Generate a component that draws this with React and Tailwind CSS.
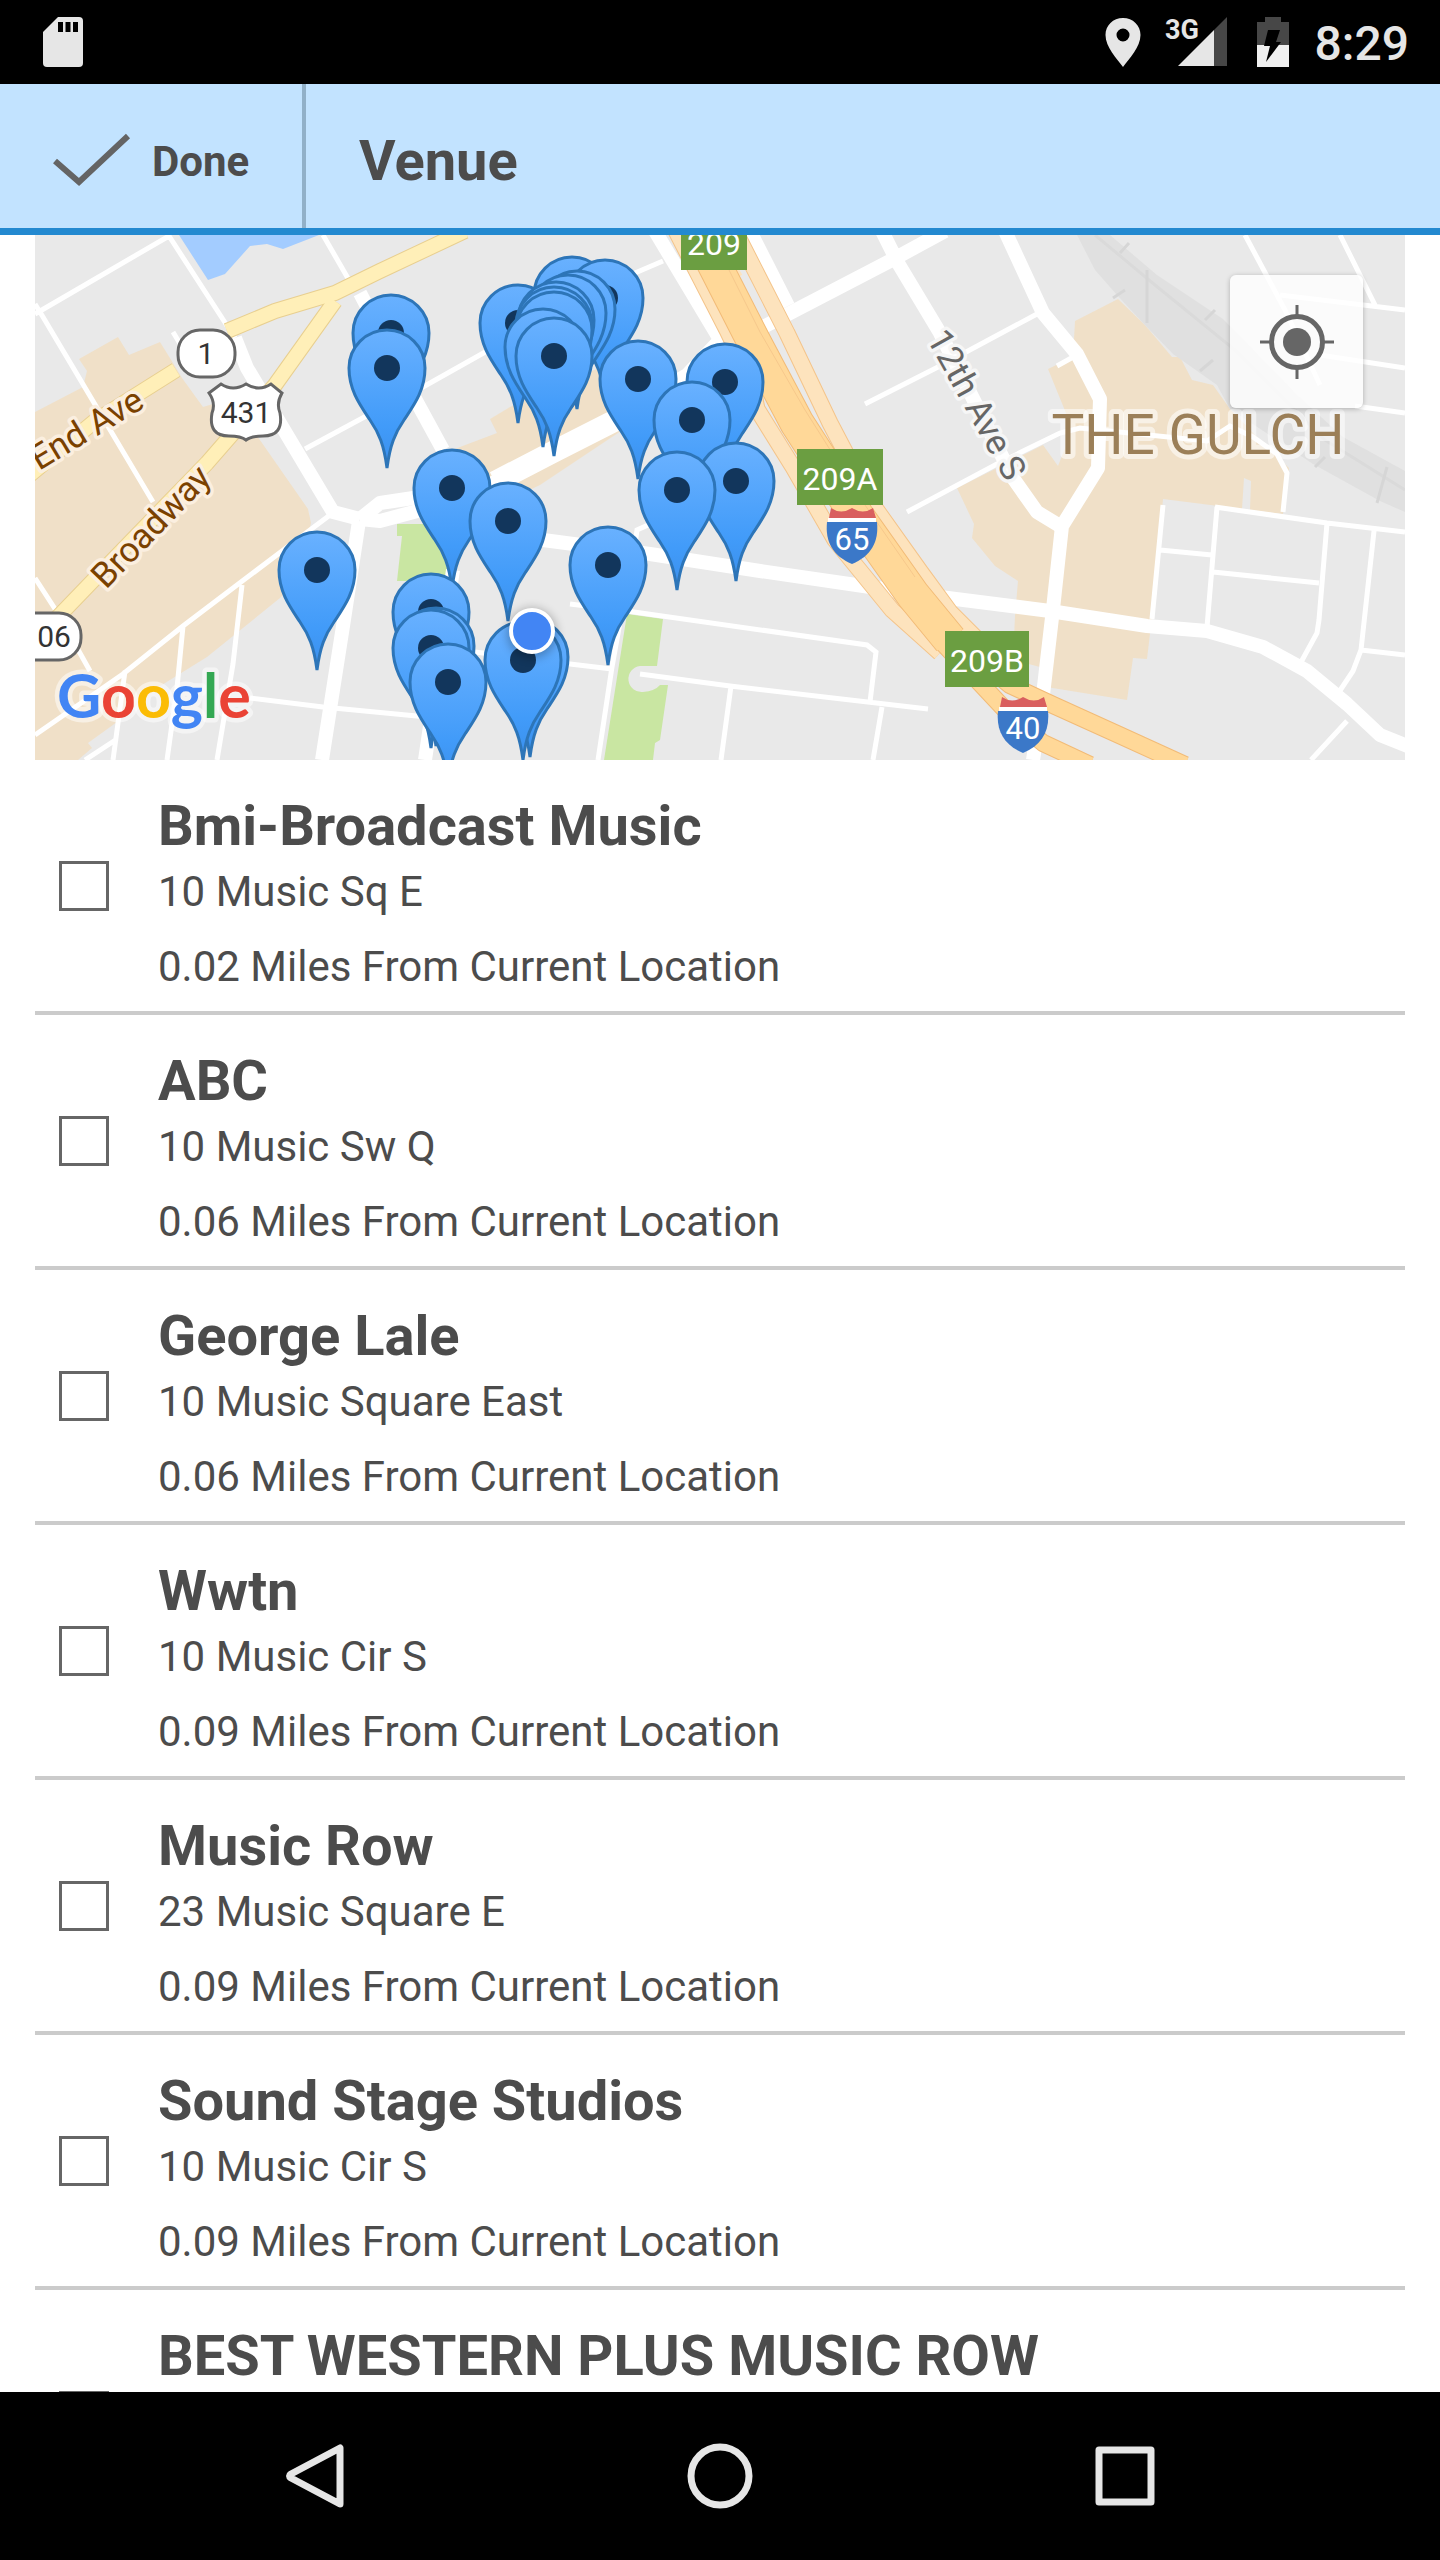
import React from "react";

const venues = [
  { name: "Bmi-Broadcast Music", address: "10 Music Sq E", miles: "0.02" },
  { name: "ABC", address: "10 Music Sw Q", miles: "0.06" },
  { name: "George Lale", address: "10 Music Square East", miles: "0.06" },
  { name: "Wwtn", address: "10 Music Cir S", miles: "0.09" },
  { name: "Music Row", address: "23 Music Square E", miles: "0.09" },
  { name: "Sound Stage Studios", address: "10 Music Cir S", miles: "0.09" },
  { name: "BEST WESTERN PLUS MUSIC ROW" },
];

const pins = [
  [356, 98], [352, 133], [483, 88], [537, 60], [570, 63], [542, 74], [533, 78],
  [521, 85], [519, 90], [519, 95], [508, 112], [519, 121], [603, 144], [690, 147],
  [657, 185], [701, 246], [642, 255], [417, 253], [473, 286], [282, 335],
  [573, 330], [396, 377], [401, 411], [396, 413], [413, 447], [495, 422], [488, 425],
];

function StatusBar() {
  return (
    <div className="flex h-[84px] shrink-0 items-center justify-between bg-black pr-[31px] pl-[43px] text-[#e6e6e6]">
      <svg className="h-[50px] w-[40px]" viewBox="0 0 40 50" role="img" aria-label="SD card">
        <path fill="currentColor" d="M15 0H36a4 4 0 0 1 4 4V46a4 4 0 0 1-4 4H4a4 4 0 0 1-4-4V15Z" />
        <path d="M15 5h5v10h-5zM22.500 5h5v10h-5zM30 5h5v10h-5z" fill="#000" />
      </svg>
      <div className="flex items-center">
        <svg className="h-[50px] w-[36px]" viewBox="0 0 36 50" role="img" aria-label="Location">
          <path
            fill="currentColor"
            fillRule="evenodd"
            d="M18 1C8 1 .500 8.500 .500 18 .500 30 12 42 18 50 24 42 35.500 30 35.500 18 35.500 8.500 28 1 18 1ZM18 11.500a6.500 6.500 0 1 1 0 13 6.500 6.500 0 0 1 0-13Z"
          />
        </svg>
        <svg className="ml-[23px] h-[50px] w-[64px] overflow-visible" viewBox="0 0 64 50" role="img" aria-label="3G signal">
          <path fill="#474747" d="M63 0V49H50V13Z" />
          <path fill="currentColor" d="M50 13V49H14Z" />
          <text x="1" y="22" fontSize="27" fontWeight="700" fontFamily="Roboto, sans-serif" fill="currentColor">3G</text>
        </svg>
        <svg className="ml-[28px] h-[50px] w-[34px]" viewBox="0 0 34 50" role="img" aria-label="Battery charging">
          <path fill="#474747" d="M9 0H25V5H33V28H1V5H9Z" />
          <path fill="#f0f0f0" d="M1 28H33V50H1Z" />
          <path d="M12 13H24L20 25H25L10 45L14 29H8Z" fill="#000" />
        </svg>
        <span className="ml-[25px] pt-[3px] text-[48px] leading-[56px] font-medium">8:29</span>
      </div>
    </div>
  );
}

function Header() {
  return (
    <header className="flex h-[151px] shrink-0 items-stretch border-b-[7px] border-[#2389d0] bg-[#c2e3ff] text-[#4c4c4c]">
      <button type="button" className="flex w-[306px] items-center gap-5 border-r-4 border-[#91b0c8] pt-[10px] pl-[52px] text-[42px] font-bold">
        <svg className="h-[56px] w-[80px]" viewBox="0 0 80 56" aria-hidden="true">
          <path d="M3 28 27 49 76 3" fill="none" stroke="#646464" strokeWidth="6" />
        </svg>
        <span>Done</span>
      </button>
      <h1 className="flex items-center pt-[10px] pl-[53px] text-[56px] font-bold">Venue</h1>
    </header>
  );
}

function Pin({ x, y }) {
  return (
    <g transform={`translate(${x} ${y})`}>
      <path
        d="M0 100C-3 77-8 65-17 52C-27 37-38 22-38 0A38 38 0 0 1 38 0C38 22 27 37 17 52C8 65 3 77 0 100Z"
        fill="url(#pinFill)"
        stroke="#2d75b8"
        strokeWidth="3"
      />
      <circle r="13" fill="#12365c" />
    </g>
  );
}

function Interstate({ x, y, label }) {
  return (
    <g transform={`translate(${x} ${y})`}>
      <path d="M3 10 5 0Q15 7 26 0Q37 7 47 0L50 10Z" fill="#d95f5f" />
      <path d="M2 10H50V14H2Z" fill="#fff" />
      <path d="M1 14H51C53 34 45 48 26 56C7 48-1 34 1 14Z" fill="#3b78c8" />
      <text x="26" y="42" textAnchor="middle" fontSize="31" fill="#fff">{label}</text>
    </g>
  );
}

function Exit({ x, y, width, label }) {
  return (
    <g transform={`translate(${x} ${y})`}>
      <rect width={width} height="56" fill="#6b9e41" />
      <text x={width / 2} y="41" textAnchor="middle" fontSize="32" fill="#fff">{label}</text>
    </g>
  );
}

function VenueMap() {
  return (
    <section aria-label="Map of venues" className="relative mx-[35px] h-[525px] shrink-0 overflow-hidden bg-[#e9e9e9]">
      <svg className="h-full w-full" viewBox="0 0 1370 525" preserveAspectRatio="xMidYMid slice" fontFamily="Roboto, sans-serif">
        <defs>
          <linearGradient id="pinFill" x1="0" y1="0" x2="0" y2="1">
            <stop offset="0" stopColor="#69b1ff" />
            <stop offset="0.7" stopColor="#419bf9" />
            <stop offset="1" stopColor="#3a8fec" />
          </linearGradient>
          <filter id="soft" x="-50%" y="-50%" width="200%" height="200%">
            <feGaussianBlur stdDeviation="5" />
          </filter>
        </defs>

        <path fill="#a3ccff" d="M144 0 173 45 190 39 215 11 232 9 248 14 284 0Z" />
        <g fill="#f0e0c8">
          <path d="M0 177 48 152 52 136 44 124 83 102 94 120 125 107 138 128 147 143 168 172 178 169 218 195 273 274 276 288 262 345 245 363 172 422 122 453 82 487 53 508 57 513 43 525H0Z" />
          <path d="M400 222 425 212 462 198 455 184 475 172 525 147 565 133 592 192 505 250 480 262 440 265Z" />
          <path d="M1083 64 1110 90 1137 122 1145 122 1157 145 1178 150 1195 174 1228 208 1254 233 1248 279 1215 275 1216 246 1209 243 1207 274 1128 264 1117 382 1112 424 1098 423 1092 465 1005 451 1005 432 978 425 980 381 983 346 960 331 937 303 939 289 922 253 1008 210 1023 231 1032 208 1035 188 1013 134 1038 122 1040 86Z" />
        </g>
        <path fill="#e0e0e0" d="M1042 0 1060 35 1082 60 1108 88 1138 119 1182 150 1195 174 1278 229 1345 266 1370 277V236L1308 202 1262 160 1188 84 1122 40 1075 0Z" />
        <g fill="none" stroke="#d6d6d6" strokeWidth="3">
          <path d="M1060 0 1120 50 1200 115 1290 205 1370 255" stroke="#dadada" />
          <path d="M1112 35V88M1085 18 1094 8M1078 63 1090 55M1170 85 1180 75M1165 136 1178 125M1280 232 1290 222M1342 268 1352 232" />
        </g>
        <g fill="#c9e6a2">
          <path d="M362 289H398L415 339 402 346H362L367 301H362Z" />
          <path d="M592 379 628 384 622 431H605A13 13 0 0 0 608 457Q620 456 625 450L633 450 625 505 620 508 618 525H569Z" />
        </g>

        <g fill="none" stroke="#fff" strokeWidth="5">
          <path d="M0 79 134 1 200 103M0 69 8 82 118 267M138 97 147 112M288 0 318 52M270 214 335 179 388 152 452 116M600 38 628 26" />
          <path d="M295 280 255 310 148 391 88 439 0 500M207 350 198 429 182 525M148 391 142 453 132 525M90 436 78 525M82 504 50 525M0 343 22 377 55 436M215 463 288 472 392 482" />
          <path d="M440 417 535 429 577 434M600 310 602 295 622 286M535 369 592 376 832 410 841 417 835 467M605 439 695 451 893 474M696 451 686 525M847 472 838 525M587 376 577 432 563 525" />
          <path d="M830 169 905 131 1002 79M872 277 962 229 1025 198 1045 193 1172 206 1195 191 1218 202 1242 219 1252 238 1248 277M1022 131 1040 121" />
          <path d="M1180 272 1292 288 1370 297M1182 272 1172 392M1128 270 1117 384M1125 315 1177 320M1178 337 1284 348M1292 288 1284 385 1282 398 1265 429M1339 296 1326 415 1318 436 1302 460M1326 415 1370 420M1312 486 1276 525" />
          <path d="M1210 0 1250 75 1285 150M1305 0 1340 70M1245 60 1370 75M1285 120 1370 133M1320 171 1370 178" />
        </g>
        <g fill="none" stroke="#fff" strokeWidth="14" strokeLinejoin="round">
          <path d="M200 103 212 133 298 277 325 284M324 286 308 391 287 525" />
          <path d="M325 58 378 160 408 215M325 284 345 268 385 262 458 248 518 215 578 183 652 140 685 105" />
          <path d="M325 284 345 286 390 274 440 285 508 305 615 319 725 336 842 353 905 362 1015 376 1112 391 1172 396 1228 412 1272 436 1312 469 1345 500 1375 512" />
          <path d="M418 335 390 525M620-4 687 108M715-4 753 71M730 91 855 26 910-4M847-4 863 28 905 98 978 243 1002 277 1025 291" />
          <path d="M970-4 1008 78 1042 119 1065 164 1063 233 1027 291 1018 374 1008 460 998 525" />
        </g>
        <path d="M460 247 518 217 585 183" fill="none" stroke="#fff" strokeWidth="22" />

        <g fill="none" strokeLinejoin="round">
          <g stroke="#e8cf90" strokeWidth="16">
            <path d="M-10 244 60 186 141 135M192 96 240 76 300 58 345 36 430-4" />
            <path d="M20 385 73 330 172 228 240 150 300 66" />
          </g>
          <g stroke="#ffefb8" strokeWidth="14">
            <path d="M-10 244 60 186 141 135M192 96 240 76 300 58 345 36 430-4" />
            <path d="M20 385 73 330 172 228 240 150 300 66" />
          </g>
        </g>

        <g fill="none" strokeLinejoin="round">
          <g stroke="#f4c48a" strokeWidth="17">
            <path d="M640-6 692 95 716 145 722 174 758 232 800 305 857 375 905 418" />
            <path d="M700-4 752 98 795 188 838 270 885 336 915 377 940 402" />
          </g>
          <g stroke="#fde3bd" strokeWidth="15">
            <path d="M640-6 692 95 716 145 722 174 758 232 800 305 857 375 905 418" />
            <path d="M700-4 752 98 795 188 838 270 885 336 915 377 940 402" />
          </g>
          <path d="M664-6 680 33 690 50" stroke="#fde3bd" strokeWidth="40" />
          <g stroke="#f2bb77">
            <path d="M672 15 718 105 762 188 822 281 878 360 915 405" strokeWidth="35" />
            <path d="M905 405 945 448 975 480 1008 508 1055 530M915 400 975 450 1018 470 1082 499 1150 530" strokeWidth="18" />
          </g>
          <g stroke="#ffd898">
            <path d="M672 15 718 105 762 188 822 281 878 360 915 405" strokeWidth="33" />
            <path d="M905 405 945 448 975 480 1008 508 1055 530M915 400 975 450 1018 470 1082 499 1150 530" strokeWidth="16" />
          </g>
          <path d="M694 35 725 97 770 175 830 270 880 342" stroke="#f6c88c" strokeWidth="1" />
        </g>

        <g fill="#fff" stroke="#666" strokeWidth="3">
          <rect x="143" y="95" width="57" height="47" rx="22" />
          <rect x="-40" y="378" width="86" height="47" rx="22" />
          <path d="M174 158 186 149Q198 157 211 149Q224 157 236 149L247 158Q241 168 245 178Q249 201 228 201Q216 201 211 205Q206 201 194 201Q173 201 177 178Q181 168 174 158Z" />
        </g>
        <g fill="#333" fontSize="30" textAnchor="middle">
          <text x="171" y="129">1</text>
          <text x="211" y="188">431</text>
          <text x="19" y="412">06</text>
        </g>
        <g fontSize="35" paintOrder="stroke" stroke="#fbefe0" strokeWidth="7" strokeLinejoin="round">
          <text transform="translate(4 236) rotate(-31)" fill="#7a4100">End Ave</text>
          <text transform="translate(71 355) rotate(-46)" fill="#7a4100">Broadway</text>
          <text transform="translate(891 103) rotate(61)" fill="#666" stroke="#f6f6f6">12th Ave S</text>
        </g>
        <text x="1163" y="219" textAnchor="middle" fontSize="55" fill="#9b7f58" paintOrder="stroke" stroke="#fff" strokeOpacity="0.55" strokeWidth="10" strokeLinejoin="round">
          THE GULCH
        </text>
        <Exit x={646} y={-21} width={66} label="209" />
        <Exit x={762} y={214} width={86} label="209A" />
        <Exit x={910} y={396} width={84} label="209B" />
        <Interstate x={791} y={273} label="65" />
        <Interstate x={962} y={462} label="40" />

        {pins.map(([x, y], i) => (
          <Pin key={i} x={x} y={y} />
        ))}
        <circle cx="497" cy="398" r="25" fill="#000" opacity="0.25" filter="url(#soft)" />
        <circle cx="497" cy="396" r="21" fill="#4285f4" stroke="#fff" strokeWidth="4" />

        <text x="22" y="483" fontFamily="Lato, sans-serif" fontSize="61" fontWeight="700" paintOrder="stroke" stroke="#fff" strokeOpacity="0.5" strokeWidth="9" strokeLinejoin="round">
          <tspan fill="#4285f4">G</tspan>
          <tspan fill="#ea4335">o</tspan>
          <tspan fill="#fbbc05">o</tspan>
          <tspan fill="#4285f4">g</tspan>
          <tspan fill="#34a853">l</tspan>
          <tspan fill="#ea4335">e</tspan>
        </text>
      </svg>
      <button
        type="button"
        aria-label="My location"
        className="absolute top-[40px] right-[42px] flex size-[133px] items-center justify-center rounded-md bg-white/80 shadow-[0_1px_5px_rgba(0,0,0,0.25)]"
      >
        <svg className="size-[74px]" viewBox="0 0 74 74" fill="none" stroke="#666" aria-hidden="true">
          <circle cx="37" cy="37" r="25.500" strokeWidth="5" />
          <circle cx="37" cy="37" r="14" fill="#666" stroke="none" />
          <path d="M37 0V10M37 64V74M0 37H10M64 37H74" strokeWidth="3" />
        </svg>
      </button>
    </section>
  );
}

function VenueRow({ venue }) {
  return (
    <li className="border-b-4 border-[#cbcbcb]">
      <label className="flex items-center gap-[49px] pl-[24px]">
        <input type="checkbox" className="size-[50px] shrink-0 appearance-none border-[3px] border-[#666] checked:bg-[#2389d0]" />
        <span className="flex min-h-[251px] flex-col pt-[36px] pb-[5px] text-[42px] text-[#4c4c4c]">
          <span className="text-[56px] leading-[60px] font-bold">{venue.name}</span>
          {venue.address && <span className="leading-[72px]">{venue.address}</span>}
          {venue.miles && <span className="leading-[78px]">{venue.miles} Miles From Current Location</span>}
        </span>
      </label>
    </li>
  );
}

function NavBar() {
  const button = "flex items-center justify-center text-[#e6e6e6]";
  return (
    <nav className="grid h-[168px] shrink-0 grid-cols-3 bg-black px-[112px]">
      <button type="button" aria-label="Back" className={button}>
        <svg className="size-[66px]" viewBox="0 0 66 66" fill="none" stroke="currentColor" strokeWidth="7" strokeLinejoin="round">
          <path d="M58 5V61L9 35Q6 33 9 31Z" />
        </svg>
      </button>
      <button type="button" aria-label="Home" className={button}>
        <svg className="size-[66px]" viewBox="0 0 66 66" fill="none" stroke="currentColor" strokeWidth="7">
          <circle cx="33" cy="33" r="29" />
        </svg>
      </button>
      <button type="button" aria-label="Recent apps" className={button}>
        <svg className="size-[66px]" viewBox="0 0 66 66" fill="none" stroke="currentColor" strokeWidth="7" strokeLinejoin="round">
          <rect x="7" y="7" width="52" height="52" />
        </svg>
      </button>
    </nav>
  );
}

export default function App() {
  return (
    <div className="flex h-screen flex-col bg-white font-[Roboto,sans-serif]">
      <StatusBar />
      <Header />
      <VenueMap />
      <ul className="mx-[35px] min-h-0 flex-1 overflow-y-auto [scrollbar-width:none]">
        {venues.map((venue) => (
          <VenueRow key={venue.name} venue={venue} />
        ))}
      </ul>
      <NavBar />
    </div>
  );
}
